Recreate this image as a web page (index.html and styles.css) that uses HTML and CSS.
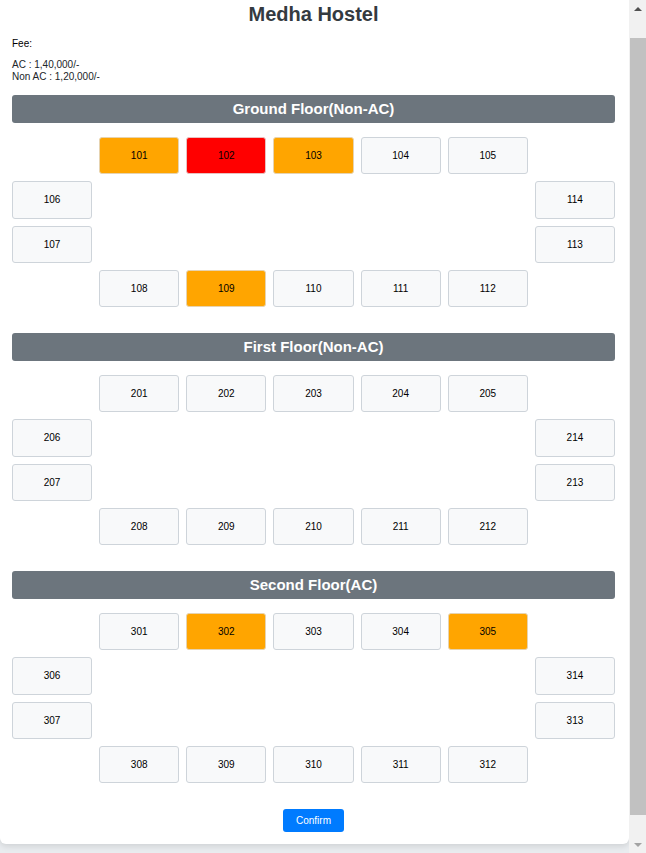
FILE: index.html
```html
<!DOCTYPE html>
<html lang="en">
<head>
<meta charset="utf-8">
<title>Medha Hostel</title>
<link rel="stylesheet" href="styles.css">
</head>
<body>
<div class="card">
  <h2 class="title">Medha Hostel</h2>
  <p class="fee-label">Fee:</p>
  <p class="fee-list">AC : 1,40,000/-<br>Non AC : 1,20,000/-</p>

  <section class="floor">
    <div class="floor-head">Ground Floor(Non-AC)</div>
    <div class="rooms">
      <button class="room c2 r1 booked">101</button>
      <button class="room c3 r1 full">102</button>
      <button class="room c4 r1 booked">103</button>
      <button class="room c5 r1">104</button>
      <button class="room c6 r1">105</button>
      <button class="room c1 r2">106</button>
      <button class="room c7 r2">114</button>
      <button class="room c1 r3">107</button>
      <button class="room c7 r3">113</button>
      <button class="room c2 r4">108</button>
      <button class="room c3 r4 booked">109</button>
      <button class="room c4 r4">110</button>
      <button class="room c5 r4">111</button>
      <button class="room c6 r4">112</button>
    </div>
  </section>

  <section class="floor">
    <div class="floor-head">First Floor(Non-AC)</div>
    <div class="rooms">
      <button class="room c2 r1">201</button>
      <button class="room c3 r1">202</button>
      <button class="room c4 r1">203</button>
      <button class="room c5 r1">204</button>
      <button class="room c6 r1">205</button>
      <button class="room c1 r2">206</button>
      <button class="room c7 r2">214</button>
      <button class="room c1 r3">207</button>
      <button class="room c7 r3">213</button>
      <button class="room c2 r4">208</button>
      <button class="room c3 r4">209</button>
      <button class="room c4 r4">210</button>
      <button class="room c5 r4">211</button>
      <button class="room c6 r4">212</button>
    </div>
  </section>

  <section class="floor">
    <div class="floor-head">Second Floor(AC)</div>
    <div class="rooms">
      <button class="room c2 r1">301</button>
      <button class="room c3 r1 booked">302</button>
      <button class="room c4 r1">303</button>
      <button class="room c5 r1">304</button>
      <button class="room c6 r1 booked">305</button>
      <button class="room c1 r2">306</button>
      <button class="room c7 r2">314</button>
      <button class="room c1 r3">307</button>
      <button class="room c7 r3">313</button>
      <button class="room c2 r4">308</button>
      <button class="room c3 r4">309</button>
      <button class="room c4 r4">310</button>
      <button class="room c5 r4">311</button>
      <button class="room c6 r4">312</button>
    </div>
  </section>

  <div class="actions">
    <button class="confirm">Confirm</button>
  </div>
</div>

<div class="scrollbar" aria-hidden="true">
  <div class="sb-btn"><span class="arrow-up"></span></div>
  <div class="sb-track"><div class="sb-thumb"></div></div>
  <div class="sb-btn"><span class="arrow-down"></span></div>
</div>
<script src="script.js"></script>
</body>
</html>
```

FILE: styles.css
```css
body {
  margin: 0 17px 0 0;
  padding: 0 0 33px 0;
  background: #e9ecef;
  font-family: "Liberation Sans", Arial, sans-serif;
  color: #000;
}
.card {
  background: #fff;
  padding: 26px 14px 12px 12px;
  border-radius: 0 0 6px 6px;
  box-shadow: 0 2px 6px rgba(0, 0, 0, 0.12);
}
.title {
  margin: 0 0 12px 0;
  font-size: 20px;
  line-height: 23px;
  font-weight: bold;
  text-align: center;
  color: #343a40;
}
.fee-label {
  margin: 0 0 9.5px 0;
  font-size: 10px;
  line-height: 11.5px;
}
.fee-list {
  margin: 0 0 13px 0;
  font-size: 10px;
  line-height: 11.5px;
  color: #212529;
}
.floor {
  margin-bottom: 25.7px;
}
.floor-head {
  height: 28px;
  line-height: 28px;
  background: #6c757d;
  color: #fff;
  font-size: 15px;
  font-weight: bold;
  text-align: center;
  border-radius: 3px;
  margin-bottom: 14px;
}
.rooms {
  display: grid;
  grid-template-columns: repeat(7, 1fr);
  grid-template-rows: repeat(4, 37.33px);
  column-gap: 7px;
  row-gap: 7px;
}
.room {
  margin: 0;
  padding: 0;
  font-family: "Liberation Sans", Arial, sans-serif;
  font-size: 10px;
  color: #000;
  background: #f8f9fa;
  border: 1px solid #ced4da;
  border-radius: 3px;
}
.room.booked {
  background: #ffa500;
  border-color: #e6d3b0;
}
.room.full {
  background: #ff0000;
  border-color: #e8c0c0;
}
.c1 { grid-column: 1; }
.c2 { grid-column: 2; }
.c3 { grid-column: 3; }
.c4 { grid-column: 4; }
.c5 { grid-column: 5; }
.c6 { grid-column: 6; }
.c7 { grid-column: 7; }
.r1 { grid-row: 1; }
.r2 { grid-row: 2; }
.r3 { grid-row: 3; }
.r4 { grid-row: 4; }
.actions {
  display: flex;
  justify-content: center;
  margin-top: -0.4px;
}
.confirm {
  height: 23px;
  padding: 0 13px;
  font-family: "Liberation Sans", Arial, sans-serif;
  font-size: 10px;
  color: #fff;
  background: #007bff;
  border: none;
  border-radius: 3px;
}

/* window scrollbar */
.scrollbar {
  position: fixed;
  top: 0;
  right: 0;
  bottom: 0;
  width: 17px;
  background: #f1f1f1;
  display: flex;
  flex-direction: column;
}
.sb-btn {
  height: 17px;
  flex: none;
  display: flex;
  align-items: center;
  justify-content: center;
}
.arrow-up {
  width: 0;
  height: 0;
  border-left: 4px solid transparent;
  border-right: 4px solid transparent;
  border-bottom: 4px solid #505050;
  margin-left: 1px;
}
.arrow-down {
  width: 0;
  height: 0;
  border-left: 4px solid transparent;
  border-right: 4px solid transparent;
  border-top: 4px solid #a3a3a3;
  margin-left: 1px;
}
.sb-track {
  flex: 1;
  display: flex;
  flex-direction: column;
  padding: 21px 0 21px 1px;
}
.sb-thumb {
  flex: 1;
  background: #c1c1c1;
}
```

FILE: script.js
```js
window.addEventListener('load', function () {
  window.scrollTo(0, 23);
});
window.scrollTo(0, 23);
```
